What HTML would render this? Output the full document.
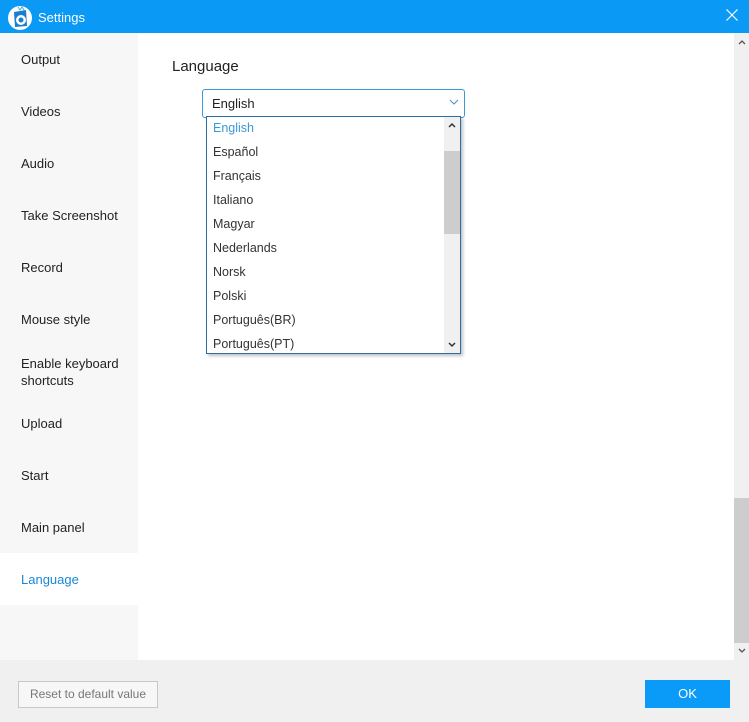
<!DOCTYPE html><html><head><style>
body{margin:0;width:749px;height:722px;position:relative;font-family:"Liberation Sans",sans-serif;font-size:13px;color:#222;background:#fff;overflow:hidden}
.a{position:absolute}
.t{left:0;top:0;width:749px;height:33px;background:#0a99f5;color:#fff}
.side{left:0;top:33px;width:138px;height:627px;background:#f7f7f7}
.si{position:absolute;left:21px;font-size:13px;color:#222}
.item{position:absolute;left:6px;font-size:12.5px;color:#333}
</style></head><body>
<div class="a t">
<svg class="a" style="left:6px;top:3px" width="28" height="28"><circle cx="14" cy="15" r="12" fill="#fff"/><path d="M8 9 L20 7 L21 23 L9 24Z" fill="#1a7fd0"/><circle cx="15" cy="17" r="5" fill="#fff"/><circle cx="15" cy="17" r="2.5" fill="#1a7fd0"/><path d="M12 4l2 3 2-3 2 3" stroke="#4ad" fill="none"/></svg>
<div class="a" style="left:38px;top:10px;font-size:13px">Settings</div>
<svg class="a" style="left:726px;top:9px" width="12" height="12"><path d="M0.5 0.5L11.5 11.5M11.5 0.5L0.5 11.5" stroke="#fff" stroke-width="1.2"/></svg>
</div>
<div class="a side">
<div class="si" style="top:19px">Output</div>
<div class="si" style="top:71px">Videos</div>
<div class="si" style="top:123px">Audio</div>
<div class="si" style="top:175px">Take Screenshot</div>
<div class="si" style="top:227px">Record</div>
<div class="si" style="top:279px">Mouse style</div>
<div class="si" style="top:322px;line-height:17px">Enable keyboard<br>shortcuts</div>
<div class="si" style="top:383px">Upload</div>
<div class="si" style="top:435px">Start</div>
<div class="si" style="top:487px">Main panel</div>
<div class="a" style="left:0;top:520px;width:138px;height:52px;background:#fff"></div>
<div class="si" style="top:539px;color:#1a88d8">Language</div>
</div>
<div class="a" style="left:172px;top:58px;font-size:15px">Language</div>
<div class="a" style="left:202px;top:89px;width:261px;height:27px;border:1px solid #3a9ad8;border-radius:3px"></div>
<div class="a" style="left:212px;top:96px;font-size:13px">English</div>
<svg class="a" style="left:449px;top:98px" width="10" height="8"><path d="M1 2l4 4 4-4" stroke="#4a90c0" fill="none"/></svg>
<div class="a" style="left:206px;top:116px;width:253px;height:236px;border:1px solid #2a6ea8;background:#fff;box-shadow:2px 2px 3px rgba(0,0,0,.25)">
<div class="item" style="top:4px;color:#3a9ad8">English</div>
<div class="item" style="top:28px">Español</div>
<div class="item" style="top:52px">Français</div>
<div class="item" style="top:76px">Italiano</div>
<div class="item" style="top:100px">Magyar</div>
<div class="item" style="top:124px">Nederlands</div>
<div class="item" style="top:148px">Norsk</div>
<div class="item" style="top:172px">Polski</div>
<div class="item" style="top:196px">Português(BR)</div>
<div class="item" style="top:220px">Português(PT)</div>
<div class="a" style="left:237px;top:0;width:16px;height:236px;background:#f0f0f0"></div>
<div class="a" style="left:237px;top:34px;width:16px;height:83px;background:#cdcdcd"></div>
<svg class="a" style="left:240px;top:4px" width="10" height="8"><path d="M2 6l3-3 3 3" stroke="#333" stroke-width="1.5" fill="none"/></svg>
<svg class="a" style="left:240px;top:224px" width="10" height="8"><path d="M2 2l3 3 3-3" stroke="#333" stroke-width="1.5" fill="none"/></svg>
</div>
<div class="a" style="left:734px;top:33px;width:15px;height:627px;background:#f0f0f0"></div>
<div class="a" style="left:734px;top:498px;width:15px;height:145px;background:#cdcdcd"></div>
<svg class="a" style="left:737px;top:38px" width="10" height="8"><path d="M2 6l3-3 3 3" stroke="#555" stroke-width="1.3" fill="none"/></svg>
<svg class="a" style="left:737px;top:647px" width="10" height="8"><path d="M2 2l3 3 3-3" stroke="#555" stroke-width="1.3" fill="none"/></svg>
<div class="a" style="left:0;top:660px;width:749px;height:62px;background:#f0f0f0"></div>
<div class="a" style="left:18px;top:681px;width:138px;height:25px;border:1px solid #c8c8c8;background:#f7f7f7;color:#777;font-size:12px;text-align:center;line-height:25px">Reset to default value</div>
<div class="a" style="left:645px;top:680px;width:85px;height:28px;background:#0a9bf8;color:#fff;font-size:13px;text-align:center;line-height:28px">OK</div>
</body></html>
